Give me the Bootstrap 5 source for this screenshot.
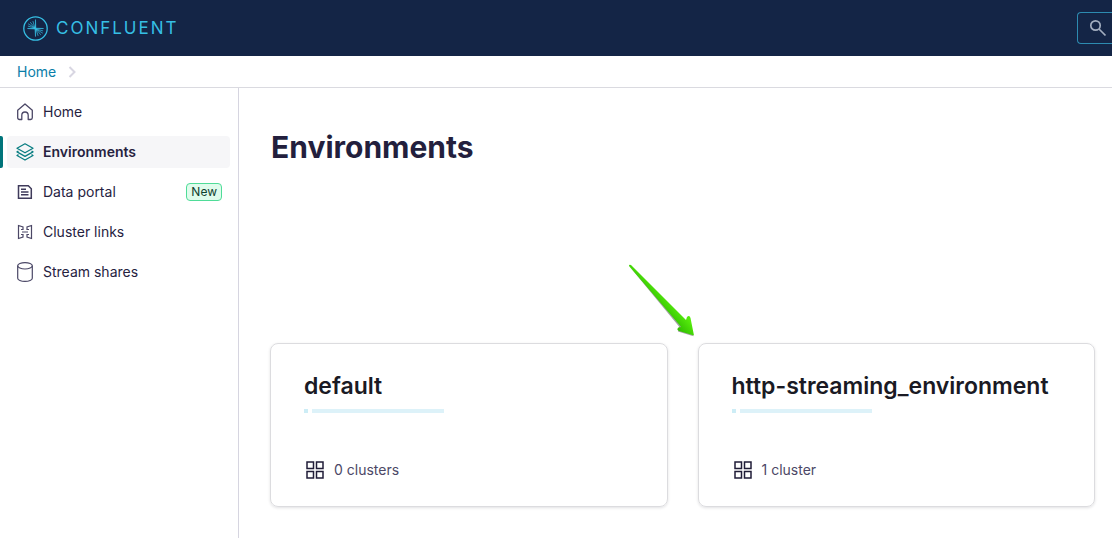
<!DOCTYPE html>
<html lang="en">
<head>
<meta charset="utf-8">
<meta name="viewport" content="width=device-width, initial-scale=1">
<title>Environments | Confluent</title>
<link rel="stylesheet" href="https://cdn.jsdelivr.net/npm/bootstrap@5.3.0/dist/css/bootstrap.min.css">
<style>
  body { font: 14px/20px Inter, sans-serif; color: #26223f; }
  a { text-decoration: none; }
  svg { flex: none; display: block; }
  .topbar { background: #142546; height: 56px; padding-left: 23px; }
  .wordmark { font: 400 17px/24px Inter, sans-serif; letter-spacing: 2px; color: #36bfe4; }
  .search-btn { width: 35px; height: 32px; border: 1px solid #2d8bb0; border-right: 0; border-radius: 4px 0 0 4px; color: #a2adbf; padding: 0 0 0 11px; }
  .search-btn:hover { border-color: #36bfe4; color: #fff; }
  .crumbs { height: 32px; padding-left: 17px; border-bottom: 1px solid #dadae0; }
  .crumbs a { color: #0a7ea8; }
  .sidebar { width: 239px; border-right: 1px solid #d6d5e0; padding: 8px 8px 8px 0; }
  .side-link { height: 32px; color: #26223f; border-radius: 4px; padding: 0 8px 0 9px; margin-left: 7px; gap: 9px; font-size: 14px; }
  .side-link:hover { color: #026a6b; }
  .side-item { position: relative; margin-bottom: 8px; }
  .side-link.active { background: #f6f6f8; font-weight: 600; }
  .side-item.current::before { content: ""; position: absolute; left: 0; top: 0; width: 3px; height: 32px; background: #00747a; border-radius: 0 2px 2px 0; }
  .new-tag { font-size: 12px; line-height: 16px; font-weight: 400; padding: 0 4px; color: #10402f; background: #dffcec; border: 1px solid #4fdc98; border-radius: 4px; }
  .content { padding: 39px 17px 31px 31px; min-height: 450px; }
  .page-title { font-size: 30px; line-height: 40px; font-weight: 700; color: #231f3d; margin: 0 0 176px 1px; }
  .env-grid { display: grid; grid-template-columns: repeat(2, minmax(0, 1fr)); gap: 30px; }
  .env-card { border: 1px solid #dcdcdf; border-radius: 8px; box-shadow: 0 1px 3px rgba(20, 20, 40, .13); padding: 26px 33px 24px; color: #1a1a24; }
  .env-name { font-size: 23px; line-height: 32px; font-weight: 600; margin: 0 0 7px; white-space: nowrap; }
  .env-bar { height: 4px; gap: 4px; margin-bottom: 45px; }
  .bar-dot { width: 4px; background: #cdedf6; }
  .bar-line { width: 132px; background: #ddf2f9; }
  .env-count { height: 24px; gap: 10px; padding-left: 2px; color: #4c4866; }
  .pointer { position: absolute; left: 388px; top: 174px; }
</style>
<script src="https://cdn.jsdelivr.net/npm/bootstrap@5.3.0/dist/js/bootstrap.bundle.min.js"></script>
</head>
<body class="bg-white">
<header class="topbar d-flex align-items-center justify-content-between">
  <a href="#" class="d-flex align-items-center gap-2">
    <svg width="25" height="25" viewBox="0 0 25 25" fill="none" stroke="#36bfe4" stroke-linecap="round">
      <circle cx="12.500" cy="12.500" r="11.700" stroke-width="1.300"/>
      <path d="M12.500 4 12.800 12.200 20.500 12.500 12.800 12.800 12.500 20.500 12 13 4.500 12.500 12 12Z" fill="#36bfe4" stroke-width=".6"/>
      <path d="M12 12 10 5.500M12 12 7.500 6.500M12 12 5.500 8M12 12 5.300 10.200M13 13l2 6.500M13 13l4.500 5.500M13 13l6.500 4M13 13l6.700 1.800" stroke-width=".7"/>
    </svg>
    <span class="wordmark">CONFLUENT</span>
  </a>
  <button type="button" class="btn search-btn" aria-label="Search">
    <svg width="18" height="18" viewBox="0 0 18 18" fill="none" stroke="currentColor" stroke-width="1.700"><circle cx="6.500" cy="6.500" r="4.700"/><path d="M10 10l6.500 6.500"/></svg>
  </button>
</header>
<nav class="crumbs d-flex align-items-center" aria-label="Breadcrumb">
  <a href="#">Home</a>
  <svg class="ms-2" width="16" height="16" viewBox="0 0 16 16" fill="none" stroke="#d8d6e2" stroke-width="2"><path d="M5.500 3l5 5-5 5"/></svg>
</nav>
<div class="d-flex">
  <nav class="sidebar flex-shrink-0" aria-label="Main">
    <ul class="list-unstyled mb-0">
      <li class="side-item"><a href="#" class="side-link d-flex align-items-center">
        <svg width="18" height="18" viewBox="0 0 18 18" fill="none" stroke="#4b4766" stroke-width="1.300" stroke-linejoin="round"><path d="M1.700 7.200 9 1l7.300 6.200v7.600a1.700 1.700 0 0 1-1.700 1.700h-2.400v-4.300a3.200 3.200 0 0 0-6.400 0v4.300H3.400a1.700 1.700 0 0 1-1.700-1.700z"/></svg>
        Home</a></li>
      <li class="side-item current"><a href="#" class="side-link active d-flex align-items-center" aria-current="page">
        <svg width="18" height="18" viewBox="0 0 18 18" fill="none" stroke="#087d81" stroke-width="1.300" stroke-linejoin="round"><path d="M9 .8 17 5.300 9 9.800 1 5.300z"/><path d="M2.500 8 1 8.900l8 4.500 8-4.500L15.500 8M2.500 11.600 1 12.500 9 17l8-4.500-1.500-.9"/></svg>
        Environments</a></li>
      <li class="side-item"><a href="#" class="side-link d-flex align-items-center">
        <svg width="18" height="18" viewBox="0 0 18 18" fill="none" stroke="#3f3b5b" stroke-width="1.500"><path d="M2.500 2.700h9.800l3 3v9.600H2.500zM5 6.200h5M5 9h7.500M5 11.800h7.500"/></svg>
        Data portal <span class="new-tag ms-auto">New</span></a></li>
      <li class="side-item"><a href="#" class="side-link d-flex align-items-center">
        <svg width="18" height="18" viewBox="0 0 18 18" fill="none" stroke="#4b4766" stroke-width="1.200"><path d="M7 7V4L2.500 2.500v13L7 14v-3M11 7V4l4.500-1.500v13L11 14v-3M6 9h6M5 6.500h2M11 6.500h2M5 11.500h2M11 11.500h2"/></svg>
        Cluster links</a></li>
      <li class="side-item"><a href="#" class="side-link d-flex align-items-center">
        <svg width="18" height="20" viewBox="0 0 18 20" fill="none" stroke="#4b4766" stroke-width="1.200"><ellipse cx="9" cy="3.800" rx="7.300" ry="3.200"/><path d="M1.700 3.800v12.400c0 1.800 3.300 3.200 7.300 3.200s7.300-1.400 7.300-3.200V3.800"/></svg>
        Stream shares</a></li>
    </ul>
  </nav>
  <main class="content flex-grow-1 position-relative">
    <h1 class="page-title">Environments</h1>
    <div class="env-grid">
      <a href="#" class="env-card">
        <h2 class="env-name">default</h2>
        <div class="env-bar d-flex"><span class="bar-dot"></span><span class="bar-line"></span></div>
        <div class="env-count d-flex align-items-center">
          <svg width="18" height="18" viewBox="0 0 18 18" fill="none" stroke="#211d38" stroke-width="1.500"><path d="M1 1h6.500v6.500H1zM10.500 1H17v6.500h-6.500zM1 10.500h6.500V17H1zM10.500 10.500H17V17h-6.500z"/></svg>
          0 clusters</div>
      </a>
      <a href="#" class="env-card">
        <h2 class="env-name">http-streaming_environment</h2>
        <div class="env-bar d-flex"><span class="bar-dot"></span><span class="bar-line"></span></div>
        <div class="env-count d-flex align-items-center">
          <svg width="18" height="18" viewBox="0 0 18 18" fill="none" stroke="#211d38" stroke-width="1.500"><path d="M1 1h6.500v6.500H1zM10.500 1H17v6.500h-6.500zM1 10.500h6.500V17H1zM10.500 10.500H17V17h-6.500z"/></svg>
          1 cluster</div>
      </a>
    </div>
    <svg class="pointer" width="72" height="76" viewBox="0 0 72 76" aria-hidden="true">
      <defs><linearGradient id="green" gradientUnits="userSpaceOnUse" x1="27" y1="42" x2="38" y2="32"><stop offset="0" stop-color="#2fbd00"/><stop offset="1" stop-color="#55ea0c"/></linearGradient></defs>
      <path d="M2.500 4.500 52 64.500 51 69.500 66.500 74.300 60 64z" fill="#444" opacity=".5"/>
      <path d="M2 4Q2 2 4 3L59 58 60 55Q62.500 52.500 63.500 56L67 73.500 52 69Q49 67.500 51.500 65.500L54 65 52.500 63Z" fill="url(#green)"/>
    </svg>
  </main>
</div>
</body>
</html>
